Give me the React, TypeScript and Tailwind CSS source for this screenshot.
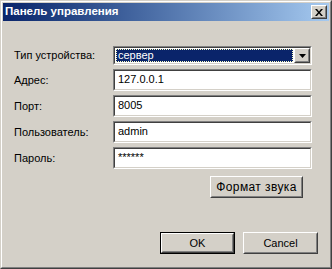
import React from "react";

const font = { fontFamily: '"Liberation Sans", Arial, sans-serif' };

function Sunken({ children, className = "" }: { children: React.ReactNode; className?: string }) {
  return (
    <div className={"border border-t-[#808080] border-l-[#808080] border-r-white border-b-white " + className}>
      <div className="flex h-full w-full border border-t-[#404040] border-l-[#404040] border-r-[#d4d0c8] border-b-[#d4d0c8] bg-white">
        {children}
      </div>
    </div>
  );
}

function Raised({ children, className = "" }: { children: React.ReactNode; className?: string }) {
  return (
    <div className={"border border-t-white border-l-white border-r-[#404040] border-b-[#404040] bg-[#d4d0c8] " + className}>
      <div className="flex h-full w-full items-center justify-center border border-t-[#d4d0c8] border-l-[#d4d0c8] border-r-[#808080] border-b-[#808080]">
        {children}
      </div>
    </div>
  );
}

function Row({ label, children, className = "" }: { label: string; children: React.ReactNode; className?: string }) {
  return (
    <div className={"flex items-center " + className}>
      <div className="w-[99px] text-[11px] leading-none text-black">{label}</div>
      {children}
    </div>
  );
}

function TextInput({ value, className = "" }: { value: string; className?: string }) {
  return (
    <Sunken className={"h-[22px] w-[199px] " + className}>
      <div className="flex items-center pl-[3px] pb-[1px] text-[11px] leading-none text-black">{value}</div>
    </Sunken>
  );
}

export default function App() {
  return (
    <div style={font} className="h-[269px] w-[332px] bg-[#d4d0c8]">
      <div className="h-full w-full border border-t-[#d4d0c8] border-l-[#d4d0c8] border-r-[#404040] border-b-[#404040]">
        <div className="flex h-full w-full flex-col border border-t-white border-l-white border-r-[#808080] border-b-[#808080] p-[1px]">
          {/* Title bar */}
          <div className="flex h-[18px] items-center justify-between bg-gradient-to-r from-[#0a246a] to-[#a6caf0] pl-[2px] pr-[2px]">
            <span className="text-[11.5px] font-bold leading-none text-white">Панель управления</span>
            <Raised className="h-[14px] w-[16px]">
              <svg width="8" height="7" viewBox="0 0 8 7">
                <path d="M0 0h2l2 2.5L6 0h2L5 3.5 8 7H6L4 4.5 2 7H0l3-3.5z" fill="#000" />
              </svg>
            </Raised>
          </div>

          {/* Body */}
          <div className="flex flex-1 flex-col pl-[11px]">
            <Row label="Тип устройства:" className="mt-[25px]">
              <Sunken className="h-[19px] w-[199px]">
                <div className="flex flex-1 items-stretch p-[1px]">
                  <div className="flex flex-1 items-center border border-dotted border-[#ffffc0] bg-[#0a246a] pl-[1px] text-[11px] leading-none text-white">
                    сервер
                  </div>
                </div>
                <Raised className="h-full w-[16px]">
                  <svg width="7" height="4" viewBox="0 0 7 4">
                    <path d="M0 0h7L3.5 4z" fill="#000" />
                  </svg>
                </Raised>
              </Sunken>
            </Row>
            <Row label="Адрес:" className="mt-[4px]">
              <TextInput value="127.0.0.1" />
            </Row>
            <Row label="Порт:" className="mt-[4px]">
              <TextInput value="8005" />
            </Row>
            <Row label="Пользователь:" className="mt-[4px]">
              <TextInput value="admin" />
            </Row>
            <Row label="Пароль:" className="mt-[4px]">
              <TextInput value="******" />
            </Row>

            <div className="mt-[7px] flex justify-end pr-[26px]">
              <Raised className="h-[22px] w-[93px]">
                <span className="text-[12px] tracking-[0.4px] leading-none text-black">Формат звука</span>
              </Raised>
            </div>

            <div className="mt-[34px] flex justify-end gap-[8px] pr-[11px]">
              <div className="h-[22px] w-[75px] border border-black">
                <Raised className="h-full w-full">
                  <span className="text-[11px] leading-none text-black">OK</span>
                </Raised>
              </div>
              <Raised className="h-[22px] w-[75px]">
                <span className="text-[11px] leading-none text-black">Cancel</span>
              </Raised>
            </div>
          </div>
        </div>
      </div>
    </div>
  );
}
